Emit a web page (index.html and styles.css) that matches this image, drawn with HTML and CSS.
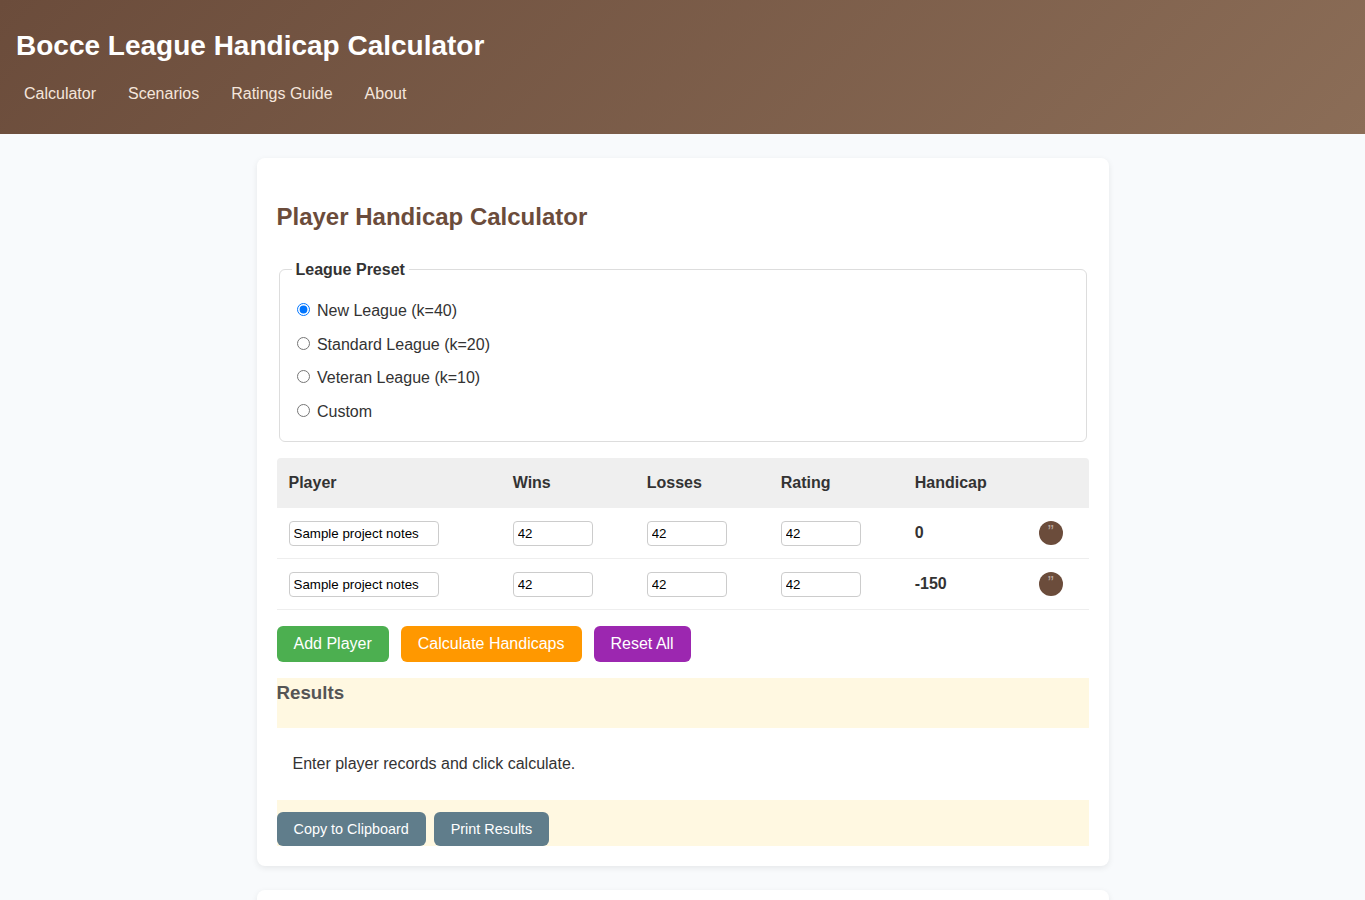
FILE: index.html
```html
<!DOCTYPE html>
<html lang="en">
<head>
    <meta charset="UTF-8">
    <meta name="viewport" content="width=device-width, initial-scale=1.0">
    <title>Bocce League Handicap Calculator</title>
    <link rel="stylesheet" href="styles.css">
</head>
<body>
    <header class="site-header">
        <h1>Bocce League Handicap Calculator</h1>
        <nav>
            <a href="#calculator">Calculator</a>
            <a href="#scenarios">Scenarios</a>
            <a href="#ratings">Ratings Guide</a>
            <a href="#about">About</a>
        </nav>
    </header>

    <main>
        <section id="calculator" class="card">
            <h2>Player Handicap Calculator</h2>
            <fieldset class="presets">
                <legend>League Preset</legend>
                <label><input type="radio" name="preset" value="40" checked> New League (k=40)</label>
                <label><input type="radio" name="preset" value="20"> Standard League (k=20)</label>
                <label><input type="radio" name="preset" value="10"> Veteran League (k=10)</label>
                <label><input type="radio" name="preset" value="custom"> Custom</label>
            </fieldset>

            <table class="players">
                <colgroup>
                    <col class="col-player">
                    <col class="col-number">
                    <col class="col-number">
                    <col class="col-number">
                    <col class="col-handicap">
                    <col>
                </colgroup>
                <thead>
                    <tr><th>Player</th><th>Wins</th><th>Losses</th><th>Rating</th><th>Handicap</th><th></th></tr>
                </thead>
                <tbody>
                    <tr>
                        <td><input class="name" type="text" value="Sample project notes"></td>
                        <td><input type="number" value="42"></td>
                        <td><input type="number" value="42"></td>
                        <td><input type="number" value="42"></td>
                        <td class="handicap">0</td>
                        <td><button class="remove" type="button">”</button></td>
                    </tr>
                    <tr>
                        <td><input class="name" type="text" value="Sample project notes"></td>
                        <td><input type="number" value="42"></td>
                        <td><input type="number" value="42"></td>
                        <td><input type="number" value="42"></td>
                        <td class="handicap">-150</td>
                        <td><button class="remove" type="button">”</button></td>
                    </tr>
                </tbody>
            </table>

            <div class="actions">
                <button class="btn add" type="button">Add Player</button>
                <button class="btn calculate" type="button">Calculate Handicaps</button>
                <button class="btn reset" type="button">Reset All</button>
            </div>

            <div class="results">
                <h3>Results</h3>
                <div class="results-output">Enter player records and click calculate.</div>
                <div class="export">
                    <button class="btn small" type="button">Copy to Clipboard</button>
                    <button class="btn small" type="button">Print Results</button>
                </div>
            </div>
        </section>

        <section id="scenarios" class="card"></section>
    </main>
</body>
</html>
```
FILE: styles.css
```css
* {
    box-sizing: border-box;
}
html {
    scrollbar-width: none;
}
body {
    margin: 0;
    font-family: "Liberation Sans", Arial, sans-serif;
    line-height: 1.6;
    color: #333;
    background-color: #f8fafc;
}
.site-header {
    height: 134px;
    padding: 24px 16px 0;
    color: white;
    background: linear-gradient(135deg, #6b4c3b, #8b6d57);
}
.site-header h1 {
    margin: 0 0 12px;
    font-size: 28px;
}
nav {
    display: flex;
    gap: 16px;
}
nav a {
    padding: 0 8px;
    color: #f5e6dc;
    text-decoration: none;
}
main {
    max-width: 900px;
    margin: 0 auto;
    padding: 24px;
}
.card {
    min-height: 200px;
    margin-bottom: 24px;
    padding: 20px;
    background-color: white;
    border-radius: 8px;
    box-shadow: 0 2px 6px rgba(0, 0, 0, 0.08);
}
.card h2 {
    margin: 20px 0 20.2px;
    font-size: 24px;
    color: #6b4c3b;
}
.presets {
    margin: 0 2px 16.2px;
    padding: 12px;
    border: 1px solid #ddd;
    border-radius: 6px;
}
.presets legend {
    padding: 0 4px;
    font-weight: bold;
}
.presets label {
    display: block;
    padding: 4px 0;
}
.players {
    width: 100%;
    table-layout: fixed;
    border-collapse: separate;
    border-spacing: 0;
}
.col-player {
    width: 224.2px;
}
.col-number {
    width: 134px;
}
.col-handicap {
    width: 124px;
}
.players th {
    height: 50px;
    padding: 12px;
    text-align: left;
    background-color: #efefef;
}
.players th:first-child {
    border-radius: 4px 0 0 0;
}
.players th:last-child {
    border-radius: 0 4px 0 0;
}
.players td {
    height: 51px;
    padding: 12px;
    border-bottom: 1px solid #eee;
}
.players input {
    display: block;
    width: 80px;
    height: 25px;
    margin-top: 1px;
    padding: 4px;
    border: 1px solid #ccc;
    border-radius: 4px;
}
.players input.name {
    width: 150px;
}
.players .handicap {
    font-weight: bold;
}
.remove {
    display: block;
    width: 24px;
    height: 24px;
    padding: 0;
    border: none;
    border-radius: 50%;
    font-size: 18px;
    color: #b9a69c;
    background-color: #6b4c3b;
}
.actions {
    display: flex;
    gap: 12px;
    margin: 16px 0;
}
.btn {
    padding: 8px 16px;
    border: 1px solid transparent;
    border-radius: 6px;
    font-family: inherit;
    font-size: 16px;
    color: white;
    cursor: pointer;
}
.add {
    background-color: #4caf50;
}
.calculate {
    background-color: #ff9800;
}
.reset {
    background-color: #9c27b0;
}
.results {
    background-color: #fff8e1;
}
.results h3 {
    margin: 0 0 20px;
    font-size: 18.72px;
    color: #555;
}
.results-output {
    padding: 23.2px 16px;
    background-color: white;
}
.export {
    display: flex;
    gap: 8px;
    margin-top: 12px;
}
.small {
    height: 34px;
    font-size: 14.4px;
    background-color: #607d8b;
}
```
